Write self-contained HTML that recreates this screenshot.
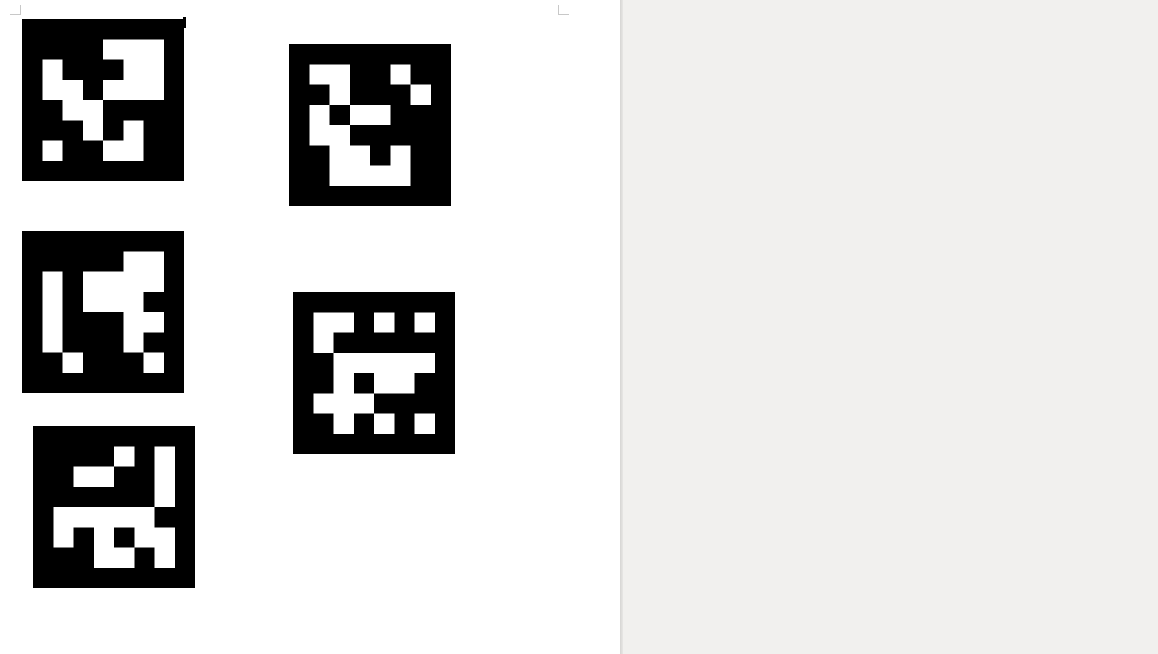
<!DOCTYPE html>
<html><head><meta charset="utf-8"><style>
html,body{margin:0;padding:0;width:1158px;height:654px;overflow:hidden;background:#f1f0ee;}
.page{position:absolute;left:0;top:0;width:620px;height:654px;background:#fff;}
.div{position:absolute;left:620px;top:0;width:3px;height:654px;background:linear-gradient(90deg,#d6d5d3,#e8e7e5);}
svg{position:absolute;shape-rendering:crispEdges;}
.m{width:162px;height:162px;}
</style></head><body>
<div class="page"></div><div class="div"></div>
<svg style="left:0;top:0" width="600" height="30">
<path d="M20.5 5V14.5H10M558.5 5V14.5H569" stroke="#c8c8c8" fill="none"/>
<rect x="183" y="17" width="3" height="11" fill="#000"/>
</svg>

<svg class="m" style="left:22px;top:19px" viewBox="0 0 8 8" preserveAspectRatio="none">
<rect width="8" height="8" fill="#000"/><g fill="#fff">
<rect x="4" y="1" width="3" height="1"/>
<rect x="1" y="2" width="1" height="1"/><rect x="5" y="2" width="2" height="1"/>
<rect x="1" y="3" width="2" height="1"/><rect x="4" y="3" width="3" height="1"/>
<rect x="2" y="4" width="2" height="1"/>
<rect x="3" y="5" width="1" height="1"/><rect x="5" y="5" width="1" height="1"/>
<rect x="1" y="6" width="1" height="1"/><rect x="4" y="6" width="2" height="1"/>
</g></svg>

<svg class="m" style="left:289px;top:44px" viewBox="0 0 8 8" preserveAspectRatio="none">
<rect width="8" height="8" fill="#000"/><g fill="#fff">
<rect x="1" y="1" width="2" height="1"/><rect x="5" y="1" width="1" height="1"/>
<rect x="2" y="2" width="1" height="1"/><rect x="6" y="2" width="1" height="1"/>
<rect x="1" y="3" width="1" height="1"/><rect x="3" y="3" width="2" height="1"/>
<rect x="1" y="4" width="2" height="1"/>
<rect x="2" y="5" width="2" height="1"/><rect x="5" y="5" width="1" height="1"/>
<rect x="2" y="6" width="4" height="1"/>
</g></svg>

<svg class="m" style="left:22px;top:231px" viewBox="0 0 8 8" preserveAspectRatio="none">
<rect width="8" height="8" fill="#000"/><g fill="#fff">
<rect x="5" y="1" width="2" height="1"/>
<rect x="1" y="2" width="1" height="4"/><rect x="3" y="2" width="4" height="1"/>
<rect x="3" y="3" width="3" height="1"/>
<rect x="5" y="4" width="2" height="1"/>
<rect x="5" y="5" width="1" height="1"/>
<rect x="2" y="6" width="1" height="1"/><rect x="6" y="6" width="1" height="1"/>
</g></svg>

<svg class="m" style="left:293px;top:292px" viewBox="0 0 8 8" preserveAspectRatio="none">
<rect width="8" height="8" fill="#000"/><g fill="#fff">
<rect x="1" y="1" width="2" height="1"/><rect x="4" y="1" width="1" height="1"/><rect x="6" y="1" width="1" height="1"/>
<rect x="1" y="2" width="1" height="1"/>
<rect x="2" y="3" width="5" height="1"/>
<rect x="2" y="4" width="1" height="1"/><rect x="4" y="4" width="2" height="1"/>
<rect x="1" y="5" width="3" height="1"/>
<rect x="2" y="6" width="1" height="1"/><rect x="4" y="6" width="1" height="1"/><rect x="6" y="6" width="1" height="1"/>
</g></svg>

<svg class="m" style="left:33px;top:426px" viewBox="0 0 8 8" preserveAspectRatio="none">
<rect width="8" height="8" fill="#000"/><g fill="#fff">
<rect x="4" y="1" width="1" height="1"/><rect x="6" y="1" width="1" height="3"/>
<rect x="2" y="2" width="2" height="1"/>
<rect x="1" y="4" width="5" height="1"/>
<rect x="1" y="5" width="1" height="1"/><rect x="3" y="5" width="1" height="1"/><rect x="5" y="5" width="2" height="1"/>
<rect x="3" y="6" width="2" height="1"/><rect x="6" y="6" width="1" height="1"/>
</g></svg>
</body></html>
